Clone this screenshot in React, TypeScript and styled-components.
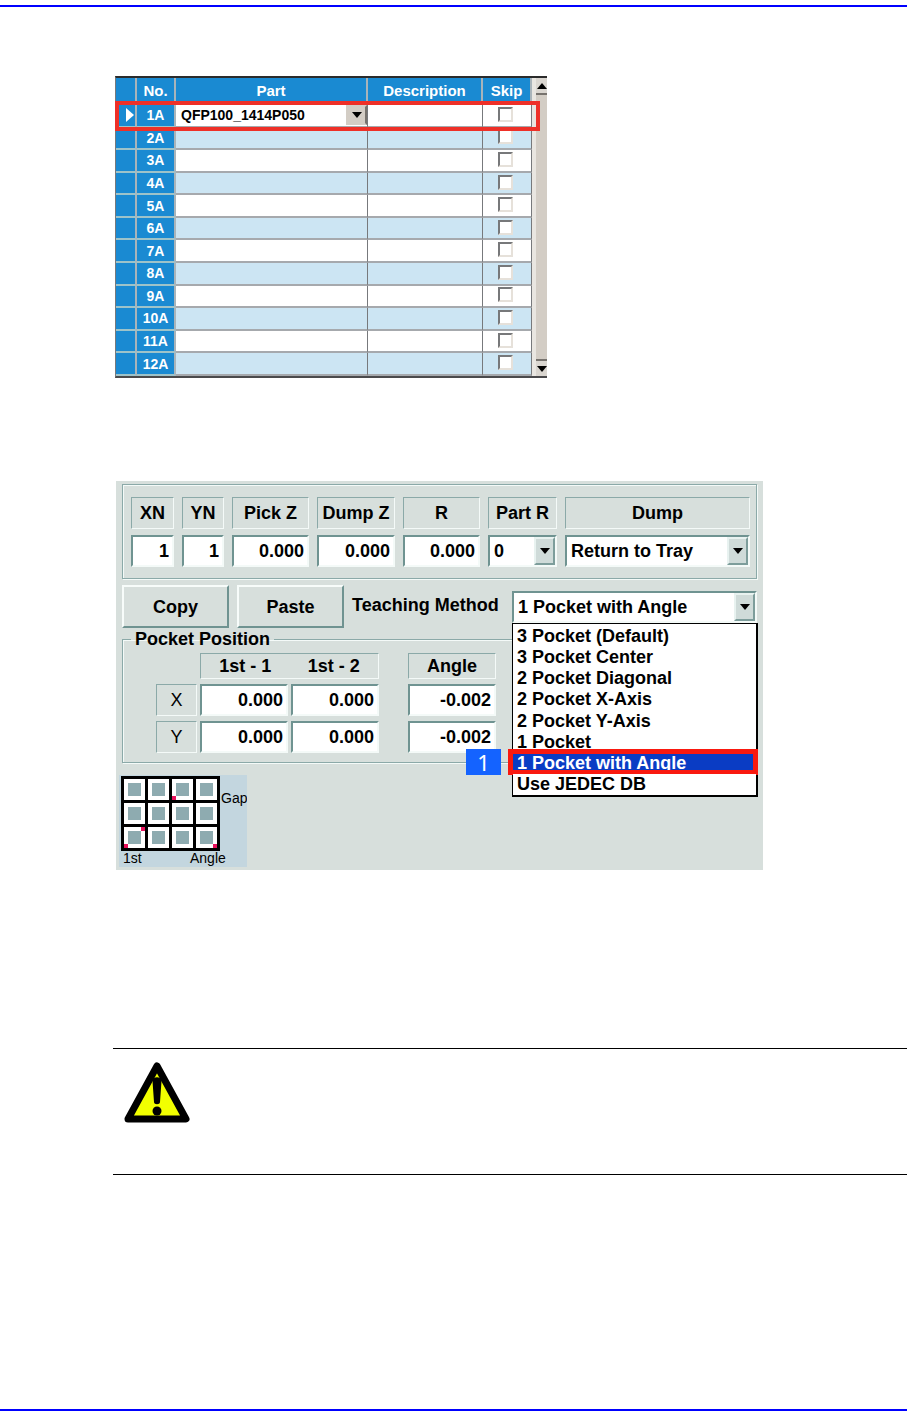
import React from "react";
import styled, { createGlobalStyle, css } from "styled-components";

const GlobalStyle = createGlobalStyle`
  * { box-sizing: border-box; }
  body { margin: 0; background: #fff; color: #000; font-family: "Liberation Sans", Arial, sans-serif; }
  button, input, select { font: inherit; color: inherit; margin: 0; border-radius: 0; }
`;

const Page = styled.div`
  display: flex;
  flex-direction: column;
  padding: 5px 0 10px;
`;

const PageRule = styled.hr`
  width: 100%;
  height: 2px;
  margin: 0;
  border: 0;
  background: #0000ff;
`;

const Content = styled.main`
  display: flex;
  flex-direction: column;
  padding: 69px 0 234px 115px;
`;

/* Feeder table */

const FeederFrame = styled.section`
  position: relative;
  display: flex;
  width: 100%;
  max-width: 432px;
  height: 302px;
  border-top: 2px solid #2b2b2b;
  border-bottom: 2px solid #4a4a4c;
  border-left: 1px solid #77797c;
`;

const FeederTable = styled.table`
  flex: 1;
  min-width: 0;
  height: 298px;
  table-layout: fixed;
  border-collapse: separate;
  border-spacing: 0;
  font-size: 14px;
  font-weight: bold;
`;

const blueCell = css`
  background: #1a8ad2;
  color: #fff;
  border-right: 2px solid #a9b4ba;
  border-bottom: 2px solid #9ec3c9;
`;

const HeadCell = styled.th`
  ${blueCell}
  height: 27px;
  padding: 0;
  font-size: 15px;
  line-height: 20px;
`;

const RowHead = styled.th`
  ${blueCell}
  height: 22px;
  padding: 0;
  line-height: 16px;
`;

const FeederRow = styled.tr<{ $shaded: boolean }>`
  background: ${(p) => (p.$shaded ? "#cce5f3" : "#fff")};
`;

const Cell = styled.td`
  height: 22px;
  padding: 0;
  border-right: 1px solid #77797c;
  border-bottom: 2px solid #a6a9ad;
  text-align: center;
  line-height: 0;
`;

const RowMarker = styled.svg`
  display: block;
  margin-left: auto;
  margin-right: 1px;
`;

const SkipBox = styled.input`
  appearance: none;
  width: 15px;
  height: 15px;
  margin: 0 3px 2px 0;
  background: #fff;
  border: 2px solid;
  border-color: #77787a #e6e1da #e6e1da #77787a;
  vertical-align: middle;
`;

const ScrollTrack = styled.div`
  display: flex;
  flex-direction: column;
  justify-content: space-between;
  width: 15px;
  border-left: 4px solid #e9e6e1;
  background: #d3cdc5;
`;

const ScrollButton = styled.button<{ $edge: "top" | "bottom" }>`
  display: flex;
  align-items: center;
  justify-content: center;
  height: 17px;
  padding: 0;
  border: 0;
  border-${(p) => (p.$edge === "top" ? "bottom" : "top")}: 2px solid #77736e;
  background: #dad6d0;
`;

const RowOutline = styled.div`
  position: absolute;
  top: 23px;
  left: -1px;
  right: 7px;
  height: 30px;
  border: 4px solid #ee3028;
  pointer-events: none;
`;

/* Tray panel */

const TrayPanel = styled.section`
  display: flex;
  flex-direction: column;
  max-width: 647px;
  margin: 103px 0 0 1px;
  padding: 3px 6px 3px;
  background: #d7dfdc;
  font-size: 18px;
  font-weight: bold;
  line-height: 20px;
`;

const etched = css`
  border: 1px solid #8ba9a8;
  box-shadow: 1px 1px 0 #f4faf8, inset 1px 1px 0 #f4faf8;
`;

const ParameterGrid = styled.div`
  ${etched}
  display: grid;
  grid-template-columns: 43fr 42fr 77fr 78fr 77fr 69fr 185fr;
  gap: 6px 8px;
  padding: 12px 6px 11px 8px;
`;

const Caption = styled.label<{ $tall?: boolean; $plain?: boolean }>`
  display: flex;
  align-items: center;
  justify-content: center;
  height: ${(p) => (p.$tall ? 32 : 26)}px;
  border: 1px solid;
  border-color: #8ba9a8 #f4faf8 #f4faf8 #8ba9a8;
  font-weight: ${(p) => (p.$plain ? "normal" : "bold")};
  white-space: nowrap;
`;

const sunken = css`
  border: 2px solid;
  border-color: #6f9391 #f4faf8 #f4faf8 #6f9391;
  background: #fff;
`;

const NumberBox = styled.input`
  ${sunken}
  width: 100%;
  min-width: 0;
  height: 32px;
  padding: 0 3px;
  text-align: right;
`;

const SelectFrame = styled.span<{ $flat?: boolean }>`
  ${(p) => !p.$flat && sunken}
  position: relative;
  display: block;
  width: 100%;
  height: ${(p) => (p.$flat ? 20 : 32)}px;
  background: #fff;
  line-height: 20px;
`;

const SelectBox = styled.select<{ $flat?: boolean }>`
  appearance: none;
  display: block;
  width: 100%;
  height: 100%;
  padding: 0 22px 0 ${(p) => (p.$flat ? 5 : 4)}px;
  border: 0;
  background: transparent;
`;

const SelectArrow = styled.span<{ $flat?: boolean }>`
  position: absolute;
  top: 0;
  right: 0;
  bottom: 0;
  display: flex;
  align-items: center;
  justify-content: center;
  width: 21px;
  border: 2px solid;
  border-color: ${(p) => (p.$flat ? "#d3cdc5 #77736e #d3cdc5 #d3cdc5" : "#e8f2f0 #7d9d9b #7d9d9b #e8f2f0")};
  background: ${(p) => (p.$flat ? "#d3cdc5" : "#cfdbd9")};
  pointer-events: none;
`;

const ActionRow = styled.div`
  display: flex;
  align-items: flex-start;
  gap: 8px;
  margin-top: 6px;
`;

const PushButton = styled.button`
  flex: 0 1 107px;
  height: 43px;
  padding: 0;
  border: 2px solid;
  border-color: #f7fcfa #6f9391 #6f9391 #f7fcfa;
  background: #d7dfdc;
`;

const MethodLabel = styled.label`
  flex: 1;
  padding-top: 10px;
  white-space: nowrap;
`;

const MethodPicker = styled.div`
  position: relative;
  flex: 0 0 245px;
  padding-top: 6px;
`;

const MethodList = styled.ul`
  position: absolute;
  z-index: 1;
  top: 38px;
  left: 0;
  right: -1px;
  display: flex;
  flex-direction: column;
  height: 174px;
  margin: 0;
  padding: 2px 0 0;
  border: 1px solid #000;
  border-right-width: 2px;
  border-bottom-width: 2px;
  background: #fff;
  list-style: none;
`;

const MethodOption = styled.li<{ $active: boolean }>`
  position: relative;
  flex: 1;
  padding-left: 4px;
  background: ${(p) => (p.$active ? "#0a3cc4" : "#fff")};
  color: ${(p) => (p.$active ? "#fff" : "#000")};
`;

const OptionOutline = styled.span`
  position: absolute;
  inset: -4px -2px -1px -5px;
  border: 5px solid #f9190f;
`;

const StepBadge = styled.span`
  position: absolute;
  top: -4px;
  bottom: -1px;
  right: calc(100% + 12px);
  display: flex;
  align-items: center;
  justify-content: center;
  width: 35px;
  background: #1463ff;
  color: #fff;
  font-family: "Noto Sans", sans-serif;
  font-size: 22px;
  font-weight: normal;
`;

const PocketGroup = styled.fieldset`
  ${etched}
  min-width: 0;
  margin: 1px 0 0;
  padding: 4px 0 9px 33px;
`;

const PocketLegend = styled.legend`
  margin-left: -25px;
  padding: 0 4px;
`;

const PocketGrid = styled.div`
  display: grid;
  grid-template-columns: 41px 88px 88px 88px;
  column-gap: 3px;
  row-gap: 5px;
`;

const PocketCaption = styled(Caption)`
  grid-column: 2 / span 2;
  justify-content: space-around;
`;

const AngleSlot = styled.div`
  margin-left: 26px;
  margin-right: -26px;
`;

const TrayDiagram = styled.svg`
  display: block;
  margin: 12px 0 0 -3px;
  font-size: 14px;
  font-weight: normal;
`;

/* Warning note */

const WarningNote = styled.aside`
  display: flex;
  align-items: flex-start;
  height: 127px;
  margin: 178px 0 0 -2px;
  padding: 12px 10px;
  border-top: 1px solid #000;
  border-bottom: 1px solid #000;
`;

const parts = Array.from({ length: 12 }, (_, i) => `${i + 1}A`);

const parameters = [
  { name: "XN", value: "1" },
  { name: "YN", value: "1" },
  { name: "Pick Z", value: "0.000" },
  { name: "Dump Z", value: "0.000" },
  { name: "R", value: "0.000" },
];

const methods = [
  "3 Pocket (Default)",
  "3 Pocket Center",
  "2 Pocket Diagonal",
  "2 Pocket X-Axis",
  "2 Pocket Y-Axis",
  "1 Pocket",
  "1 Pocket with Angle",
  "Use JEDEC DB",
];

const axes = ["X", "Y"];

function Triangle({ up = false }: { up?: boolean }) {
  return (
    <svg width="10" height="6" viewBox="0 0 10 6" aria-hidden="true">
      <path d={up ? "M0 6 5 0l5 6z" : "M0 0h10L5 6z"} />
    </svg>
  );
}

function Dropdown({ id, label, options, value, flat }: {
  id?: string;
  label?: string;
  options: string[];
  value: string;
  flat?: boolean;
}) {
  return (
    <SelectFrame $flat={flat}>
      <SelectBox id={id} aria-label={label} defaultValue={value} $flat={flat}>
        {options.map((o) => (
          <option key={o}>{o}</option>
        ))}
      </SelectBox>
      <SelectArrow $flat={flat}>
        <Triangle />
      </SelectArrow>
    </SelectFrame>
  );
}

function Feeders() {
  return (
    <FeederFrame>
      <FeederTable>
        <colgroup>
          <col style={{ width: 21 }} />
          <col style={{ width: 39 }} />
          <col />
          <col style={{ width: 115 }} />
          <col style={{ width: 49 }} />
        </colgroup>
        <thead>
          <tr>
            <HeadCell />
            <HeadCell>No.</HeadCell>
            <HeadCell>Part</HeadCell>
            <HeadCell>Description</HeadCell>
            <HeadCell>Skip</HeadCell>
          </tr>
        </thead>
        <tbody>
          {parts.map((no, i) => (
            <FeederRow key={no} $shaded={i % 2 === 1}>
              <RowHead>
                {i === 0 && (
                  <RowMarker width="8" height="14" viewBox="0 0 8 14">
                    <path d="M0 0 8 7 0 14z" fill="#fff" />
                  </RowMarker>
                )}
              </RowHead>
              <RowHead scope="row">{no}</RowHead>
              <Cell>
                {i === 0 && (
                  <Dropdown flat label="Part" value="QFP100_1414P050" options={["QFP100_1414P050"]} />
                )}
              </Cell>
              <Cell />
              <Cell>
                <SkipBox type="checkbox" aria-label={`Skip ${no}`} />
              </Cell>
            </FeederRow>
          ))}
        </tbody>
      </FeederTable>
      <ScrollTrack>
        <ScrollButton $edge="top" aria-label="Scroll up">
          <Triangle up />
        </ScrollButton>
        <ScrollButton $edge="bottom" aria-label="Scroll down">
          <Triangle />
        </ScrollButton>
      </ScrollTrack>
      <RowOutline />
    </FeederFrame>
  );
}

function PocketDiagram() {
  return (
    <TrayDiagram width="128" height="92" viewBox="0 0 128 92">
      <rect width="128" height="92" fill="#c3d6df" />
      <rect x="2" y="1" width="99" height="75" />
      {[0, 1, 2].map((r) =>
        [0, 1, 2, 3].map((c) => (
          <g key={`${r}-${c}`}>
            <rect x={5 + c * 24} y={4 + r * 24} width="21" height="21" fill="#fff" />
            <rect x={9 + c * 24} y={8 + r * 24} width="13" height="13" fill="#8eabb0" />
          </g>
        ))
      )}
      <g fill="#e8115c">
        <rect x="53" y="21" width="4" height="4" />
        <rect x="22" y="52" width="4" height="4" />
        <rect x="5" y="69" width="4" height="4" />
        <rect x="94" y="69" width="4" height="4" />
      </g>
      <text x="102" y="28">Gap</text>
      <text x="4" y="88">1st</text>
      <text x="71" y="88">Angle</text>
    </TrayDiagram>
  );
}

function Tray() {
  return (
    <TrayPanel>
      <ParameterGrid>
        {parameters.map((p) => (
          <Caption key={p.name} $tall htmlFor={p.name}>{p.name}</Caption>
        ))}
        <Caption $tall htmlFor="part-r">Part R</Caption>
        <Caption $tall htmlFor="dump">Dump</Caption>
        {parameters.map((p) => (
          <NumberBox key={p.name} id={p.name} defaultValue={p.value} />
        ))}
        <Dropdown id="part-r" value="0" options={["0"]} />
        <Dropdown id="dump" value="Return to Tray" options={["Return to Tray"]} />
      </ParameterGrid>

      <ActionRow>
        <PushButton>Copy</PushButton>
        <PushButton>Paste</PushButton>
        <MethodLabel htmlFor="method">Teaching Method</MethodLabel>
        <MethodPicker>
          <Dropdown id="method" value="1 Pocket with Angle" options={methods} />
          <MethodList role="listbox" aria-label="Teaching Method">
            {methods.map((m) => {
              const active = m === "1 Pocket with Angle";
              return (
                <MethodOption key={m} role="option" aria-selected={active} $active={active}>
                  {m}
                  {active && <OptionOutline />}
                  {active && <StepBadge>1</StepBadge>}
                </MethodOption>
              );
            })}
          </MethodList>
        </MethodPicker>
      </ActionRow>

      <PocketGroup>
        <PocketLegend>Pocket Position</PocketLegend>
        <PocketGrid>
          <PocketCaption as="div">
            <span>1st - 1</span>
            <span>1st - 2</span>
          </PocketCaption>
          <AngleSlot>
            <Caption as="div">Angle</Caption>
          </AngleSlot>
          {axes.map((axis) => (
            <React.Fragment key={axis}>
              <Caption $tall $plain htmlFor={`${axis}-1`}>{axis}</Caption>
              <NumberBox id={`${axis}-1`} defaultValue="0.000" />
              <NumberBox aria-label={`${axis} second pocket`} defaultValue="0.000" />
              <AngleSlot>
                <NumberBox aria-label={`${axis} angle`} defaultValue="-0.002" />
              </AngleSlot>
            </React.Fragment>
          ))}
        </PocketGrid>
      </PocketGroup>
      <PocketDiagram />
    </TrayPanel>
  );
}

export default function App() {
  return (
    <>
      <GlobalStyle />
      <Page>
        <PageRule />
        <Content>
          <Feeders />
          <Tray />
          <WarningNote aria-label="Warning">
            <svg width="68" height="64" viewBox="0 0 68 64">
              <path d="M34 5 63 58H5z" fill="#f2ff00" stroke="#000" strokeWidth="7" strokeLinejoin="round" />
              <path d="M29.500 20c0-5 9-5 9 0l-1.500 21c0 3-6 3-6 0z" />
              <circle cx="34" cy="50" r="4.500" />
            </svg>
          </WarningNote>
        </Content>
        <PageRule />
      </Page>
    </>
  );
}
